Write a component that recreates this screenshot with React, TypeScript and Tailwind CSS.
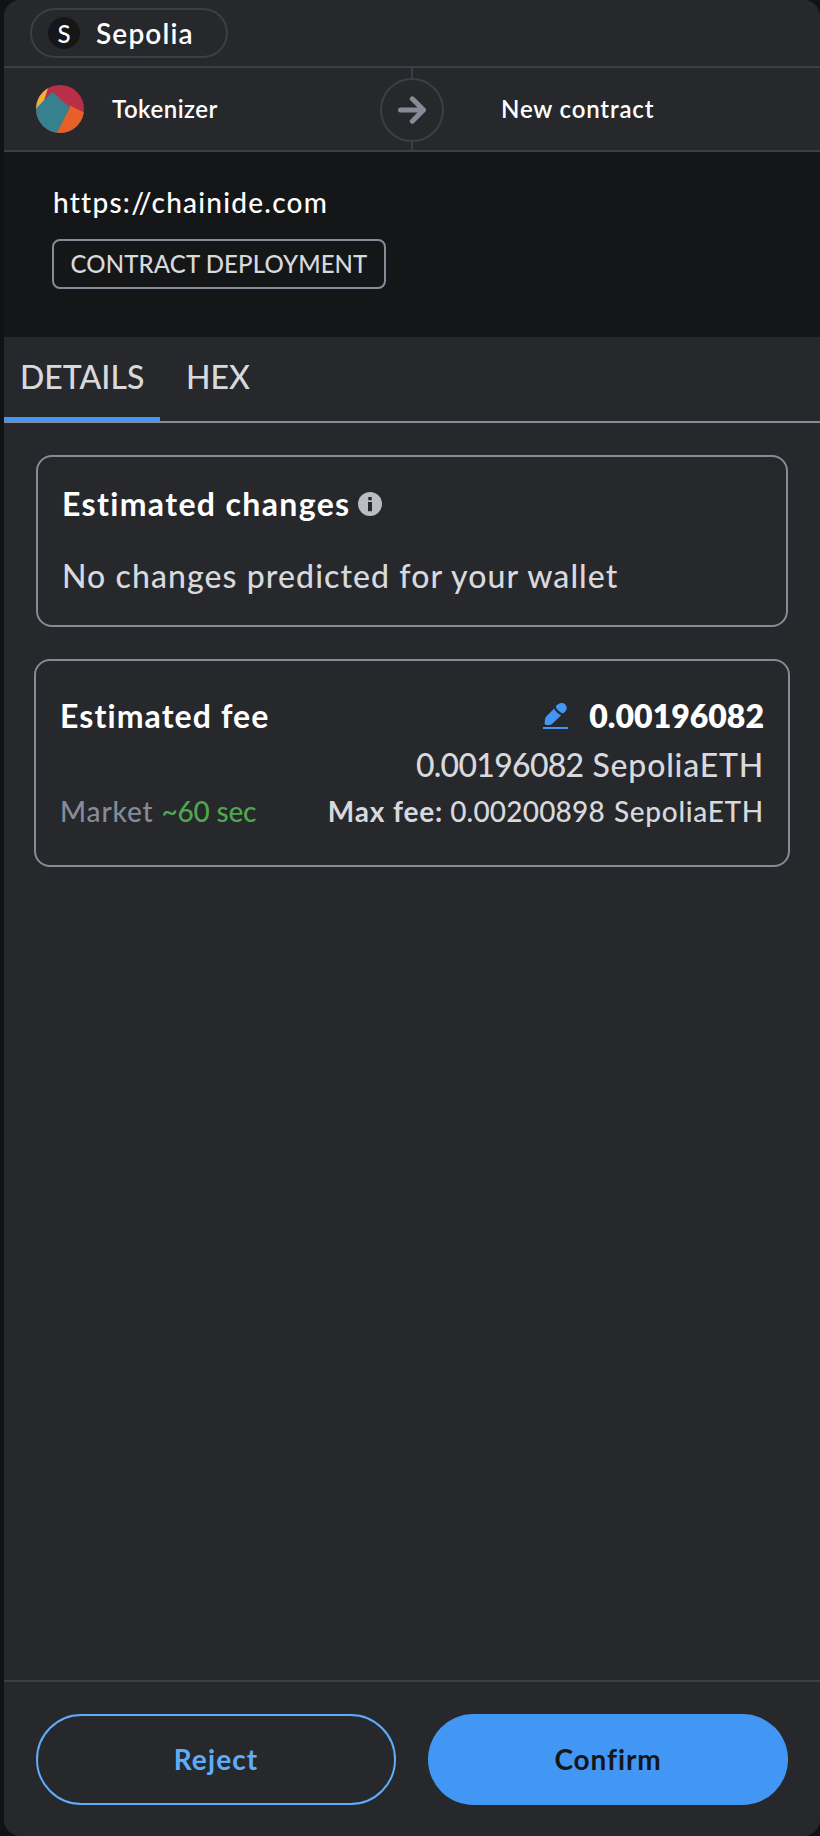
import type { ReactNode } from "react";

function NetworkPill() {
  return (
    <div className="flex h-[50px] w-[198px] items-center rounded-full border-2 border-[#3d3e45] pl-4">
      <span className="flex size-8 items-center justify-center rounded-full bg-[#151618] text-[24px] leading-[33px] font-medium">
        S
      </span>
      <span className="ml-4 text-[28px] leading-[42px] font-semibold tracking-[1.15px]">Sepolia</span>
    </div>
  );
}

function Avatar() {
  return (
    <svg viewBox="0 0 48 48" className="size-12 shrink-0">
      <clipPath id="avatar">
        <circle cx="24" cy="24" r="24" />
      </clipPath>
      <g clipPath="url(#avatar)">
        <rect width="48" height="48" fill="#b92f48" />
        <path d="M0 0H13L7.5 17L0 26Z" fill="#edb13d" />
        <path d="M34 20.5L48 27.5V48H20.5Z" fill="#e95f2a" />
        <path d="M16.3 7L34 22.5L20.8 48H0V23.5Z" fill="#37808e" />
      </g>
    </svg>
  );
}

function ArrowIcon() {
  return (
    <svg viewBox="0 0 28 28" className="size-7" fill="none" stroke="#858b97" strokeWidth="5" strokeLinecap="round" strokeLinejoin="round">
      <path d="M2.5 14H24M14.3 2.8L25.5 14L14.3 25.2" />
    </svg>
  );
}

function InfoIcon() {
  return (
    <svg viewBox="0 0 24 24" className="size-6">
      <circle cx="12" cy="12" r="12" fill="#babdc2" />
      <path d="M10.300 5H13.700V8.300H10.300ZM10 10H14V19.300H10Z" fill="#27282c" />
    </svg>
  );
}

function EditIcon() {
  return (
    <svg viewBox="0 0 25 26" className="h-[26px] w-[25px]" fill="#4297f5">
      <path d="M14 1.8L15.7 1C18-.7 21-.2 22.500 1.700C24.3 3.700 24 6.500 22.300 8.400L20.200 10.500C16.500 9.200 14 6.800 12.700 3.700Z" />
      <path d="M11.200 5.500C12.500 8.500 15 11 18.200 12.300L9.500 20.500C8.500 21.500 6.800 22 5.500 22H3.500C2.300 22 1.500 21.200 1.600 20L2 16.500C2.200 15 2.800 14 3.800 13Z" />
      <rect y="24" width="25" height="2" />
    </svg>
  );
}

function Tab({ active, children }: { active?: boolean; children: ReactNode }) {
  return (
    <button
      className={
        active
          ? "h-[84px] w-[156px] border-b-4 border-[#4297f5] pl-4 text-left"
          : "h-[84px] border-b-4 border-transparent pl-[26px] text-left"
      }
    >
      <span className="block text-[32px] leading-[48px] font-medium">{children}</span>
    </button>
  );
}

export default function App() {
  return (
    <div className="h-[1836px] w-[820px] bg-[#111214] pl-1 font-['Lato',sans-serif] text-white">
      <main className="flex h-full flex-col overflow-hidden rounded-[16px] bg-[#27282c]">
        <header className="h-[68px] border-b-2 border-[#3d3e45] pt-2 pl-[26px]">
          <NetworkPill />
        </header>

        <section className="grid h-[84px] grid-cols-[376px_64px_1fr] border-b-2 border-[#3d3e45]">
          <div className="flex items-center pl-8">
            <Avatar />
            <span className="mb-px ml-7 text-[24px] leading-9 font-semibold tracking-[0.5px]">Tokenizer</span>
          </div>
          <div className="flex flex-col items-center">
            <div className="h-[10px] w-[2px] bg-[#3d3e45]" />
            <div className="flex size-16 items-center justify-center rounded-full border-2 border-[#3d3e45]">
              <ArrowIcon />
            </div>
            <div className="h-2 w-[2px] bg-[#3d3e45]" />
          </div>
          <div className="flex items-center pl-[57px]">
            <span className="mb-px text-[24px] leading-9 font-semibold tracking-[0.83px]">New contract</span>
          </div>
        </section>

        <section className="flex h-[185px] flex-col items-start bg-[#151618] pl-12">
          <p className="mt-[29px] pl-px text-[28px] leading-[42px] font-medium tracking-[1.24px]">https://chainide.com</p>
          <div className="mt-4 flex h-[50px] w-[334px] items-center justify-center rounded-lg border-2 border-[#858b97]">
            <span className="pb-px text-[24px] leading-[45px] font-medium tracking-[0.12px] text-[#d7d9dd]">
              CONTRACT DEPLOYMENT
            </span>
          </div>
        </section>

        <nav className="flex h-[86px] border-b-2 border-[#858b97] text-[#d7d9dd]">
          <Tab active>DETAILS</Tab>
          <Tab>HEX</Tab>
        </nav>

        <div className="flex flex-1 flex-col pt-8">
          <section className="mx-8 h-[172px] rounded-[16px] border-2 border-[#858b97] pt-[23px] pl-6">
            <div className="flex h-12 items-center gap-[7px]">
              <h2 className="text-[32px] leading-[48px] font-bold tracking-[1.36px]">Estimated changes</h2>
              <InfoIcon />
            </div>
            <p className="mt-6 text-[32px] leading-[48px] font-medium tracking-[1.09px] text-[#d7d9dd]">
              No changes predicted for your wallet
            </p>
          </section>

          <section className="mx-[30px] mt-8 flex h-[208px] flex-col rounded-[16px] border-2 border-[#858b97] px-6 pt-[31px]">
            <div className="flex h-12 items-center justify-between">
              <h2 className="text-[32px] leading-[48px] font-bold tracking-[1.1px]">Estimated fee</h2>
              <div className="flex items-center">
                <EditIcon />
                <span className="ml-[21px] text-[32px] leading-[48px] font-extrabold">0.00196082</span>
              </div>
            </div>
            <p className="flex h-12 justify-end pt-px text-[32px] leading-[48px] font-medium text-[#d7d9dd]">
              <span className="tracking-[-0.7px]">0.00196082</span>
              <span className="ml-[9px] tracking-[0.8px]">SepoliaETH</span>
            </p>
            <div className="flex h-[46px] justify-between text-[28px] leading-[46px] font-medium">
              <div className="flex">
                <span className="tracking-[0.85px] text-[#858b97]">Market</span>
                <span className="ml-[8px] tracking-[-0.2px] text-[#4ea74e]">~60 sec</span>
              </div>
              <div className="flex text-[#d7d9dd]">
                <span className="font-bold tracking-[0.85px]">Max fee:</span>
                <span className="ml-[7px] tracking-[0.2px]">0.00200898</span>
                <span className="ml-[9px] tracking-[0.7px]">SepoliaETH</span>
              </div>
            </div>
          </section>
        </div>

        <footer className="grid h-[156px] grid-cols-2 gap-8 border-t-2 border-[#3d3e45] px-8 pt-8 text-[28px] font-bold">
          <button className="h-[91px] rounded-full border-2 border-[#5dadfa] leading-[87px] tracking-[1.1px] text-[#5dadfa]">
            Reject
          </button>
          <button className="h-[91px] rounded-full bg-[#4297f5] leading-[91px] tracking-[0.9px] text-[#151618]">Confirm</button>
        </footer>
      </main>
    </div>
  );
}
